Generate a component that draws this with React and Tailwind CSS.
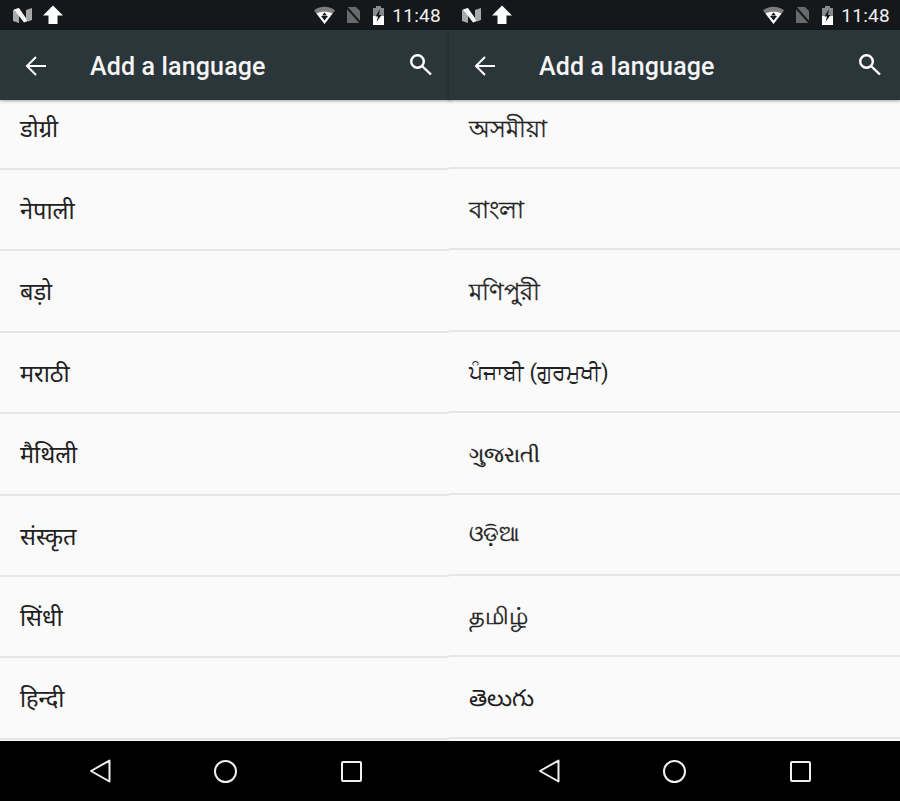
const leftLanguages = [
  { name: "डोग्री", size: "text-[23.5px]" },
  { name: "नेपाली", size: "text-[23.5px]" },
  { name: "बड़ो", size: "text-[23.5px]" },
  { name: "मराठी", size: "text-[23.5px]" },
  { name: "मैथिली", size: "text-[23.5px]" },
  { name: "संस्कृत", size: "text-[23.5px]" },
  { name: "सिंधी", size: "text-[23.5px]" },
  { name: "हिन्दी", size: "text-[23.5px]" },
];

const rightLanguages = [
  { name: "অসমীয়া", size: "text-[24px] [-webkit-text-stroke:0.3px_#212121]" },
  { name: "বাংলা", size: "text-[24px] [-webkit-text-stroke:0.3px_#212121]", pad: "pt-[3px]" },
  { name: "মণিপুরী", size: "text-[24px] [-webkit-text-stroke:0.3px_#212121]", pad: "pt-[4px]" },
  { name: "ਪੰਜਾਬੀ (ਗੁਰਮੁਖੀ)", size: "text-[22px] text-[#2c2c2c]", pad: "pt-[3px]" },
  { name: "ગુજરાતી", size: "text-[21px] [-webkit-text-stroke:0.3px_#212121]", pad: "pt-[6px]" },
  { name: "ଓଡ଼ିଆ", size: "text-[20.6px] [-webkit-text-stroke:0.3px_#212121]", pad: "pt-[1px]" },
  { name: "தமிழ்", size: "text-[23.6px] [-webkit-text-stroke:0.3px_#212121]", pad: "pt-[2px]" },
  { name: "తెలుగు", size: "text-[23.3px] text-[#3a3a3a]", pad: "pt-[2px]" },
];

const StatusBar = () => (
  <div className="flex h-[30px] shrink-0 items-center bg-[#14181a] pl-[13px] pr-[10px]">
    {/* N logo */}
    <svg width="20" height="17" viewBox="0 0 20 17" className="mr-[10px]">
      <path d="M0 3l6-2v15l-6-2z" fill="#a8a8a8" />
      <path d="M1 2.500L6 1l9 13-4 1.500z" fill="#f4f4f4" />
      <path d="M13 3l6-2v12l-4 1.500-2-3z" fill="#a8a8a8" />
    </svg>
    {/* upload arrow */}
    <svg width="20" height="20" viewBox="0 0 20 20">
      <path d="M10 0.500L20 10.500h-5.500V19h-9v-8.500H0z" fill="#ffffff" />
    </svg>
    <div className="ml-auto flex items-center">
      {/* wifi with data arrows */}
      <svg width="21" height="18" viewBox="0 0 21 18" className="mr-[10px]">
        <path d="M0 4.500C5.500 -0.500 15.500 -0.500 21 4.500L10.500 18z" fill="#7d7d7d" />
        <path d="M2.500 7.500C6.500 5 14.500 5 18.500 7.500L10.500 18z" fill="#ffffff" />
        <path d="M7 10h7l-3.500 4.500z" fill="#14181a" />
        <path d="M10.500 6.500l2.500 3h-5z" fill="#14181a" />
      </svg>
      <svg width="17" height="18" viewBox="0 0 17 18" className="mr-[10px]">
        <path d="M2 1h9l4 4v12H2z" fill="#6a6a6a" />
        <path d="M1 0.500L16 17.500" stroke="#14181a" strokeWidth="2" />
      </svg>
      <svg width="13" height="19" viewBox="0 0 13 19" className="mr-[7px]">
        <path d="M4 0h5v2h3v17H1V2h3z" fill="#ffffff" />
        <path d="M1 2h3V0h5v2h3v8H1z" fill="#8a8a8a" />
        <path d="M8 3L3.500 10.500h2.500L4.500 16l5-7H7z" fill="#14181a" />
      </svg>
      <span className="font-['Roboto',sans-serif] text-[19px] leading-none font-normal tracking-[0.3px] text-[#f1f1f1]">11:48</span>
    </div>
  </div>
);

const Toolbar = () => (
  <div className="z-10 flex h-[70px] shrink-0 items-center bg-[#2b363b] pl-[25px] pr-[19px] shadow-[0_1px_3px_rgba(0,0,0,0.35)]">
    <svg width="21" height="20" viewBox="0 0 21 20" fill="none" stroke="#ffffff" strokeWidth="2" className="mt-[1px]">
      <path d="M21 10H2M11 1l-9 9 9 9" />
    </svg>
    <span className="ml-[44px] pt-[4px] font-['Roboto',sans-serif] text-[25px] font-medium tracking-[0.15px] text-[#f5f5f5]">Add a language</span>
    <svg width="22" height="21" viewBox="0 0 22 21" fill="none" stroke="#ffffff" strokeWidth="2.400" className="mb-[1px] ml-auto">
      <circle cx="7.500" cy="7.500" r="6.300" />
      <path d="M12 12l9 8.500" />
    </svg>
  </div>
);

const NavBar = () => (
  <div className="flex h-[60px] shrink-0 items-center bg-black">
    <div className="ml-[90px]">
      <svg width="21" height="24" viewBox="0 0 21 24" fill="none" stroke="#f0f0f0" strokeWidth="2" strokeLinejoin="round">
        <path d="M19.500 1.500V22.500L1 12z" />
      </svg>
    </div>
    <div className="ml-[103px] h-[23px] w-[23px] rounded-full border-2 border-[#f0f0f0]" />
    <div className="ml-[104px] h-[21px] w-[21px] rounded-[2px] border-2 border-[#f0f0f0]" />
  </div>
);

const Panel = ({ languages, className, firstRow }) => (
  <div className={"flex h-[801px] w-[451px] shrink-0 flex-col " + className}>
    <StatusBar />
    <Toolbar />
    <div className="flex-1 overflow-hidden bg-[#fafafa]">
      {languages.map((language, i) => (
        <div
          key={language.name}
          className={
            "flex items-center border-b-2 border-[#e6e6e6] pl-5 font-['Roboto','Noto_Sans',sans-serif] text-[#212121] " +
            language.size + " " +
            (i === 0 ? firstRow : "h-[81.4px] " + (language.pad || "pt-[4px]"))
          }
        >
          {language.name}
        </div>
      ))}
    </div>
    <NavBar />
  </div>
);

export default function App() {
  return (
    <div className="flex h-[801px] w-[900px] overflow-hidden">
      <Panel languages={leftLanguages} className="" firstRow="h-[70px] pb-[9px]" />
      {/* second phone shot sits slightly over the first, list is 1px higher */}
      <Panel languages={rightLanguages} className="relative -ml-[2px]" firstRow="h-[69px] pb-[10px]" />
    </div>
  );
}
